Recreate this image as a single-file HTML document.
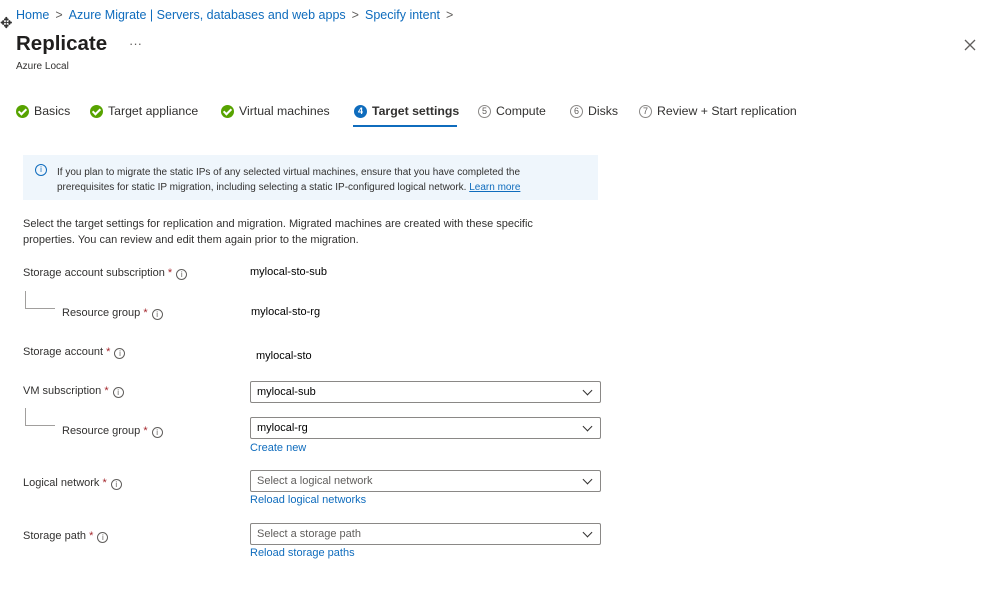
<!DOCTYPE html>
<html><head><style>
*{margin:0;padding:0;box-sizing:border-box}
body{width:984px;height:615px;background:#fff;font-family:"Liberation Sans",sans-serif;color:#323130;position:relative;overflow:hidden}
.a{position:absolute;white-space:nowrap}
.lnk{color:#0f6cbd}
.bc{font-size:12.5px;color:#0f6cbd;top:8px;left:16px}
.bc span.s{color:#605e5c;margin:0 6px}
.tab{top:104px;font-size:12.3px;display:flex;align-items:center;gap:5px;color:#323130}
.ok{width:13px;height:13px;border-radius:50%;background:#57a300;display:inline-block;position:relative}
.ok:after{content:"";position:absolute;left:4px;top:2px;width:3px;height:6px;border:solid #fff;border-width:0 2px 2px 0;transform:rotate(45deg)}
.num{width:13px;height:13px;border-radius:50%;border:1px solid #8a8886;font-size:9px;display:inline-flex;align-items:center;justify-content:center;color:#605e5c}
.lab{font-size:11px;color:#323130}
.lab .r{color:#a4262c}
.i{display:inline-block;width:11px;height:11px;border:1px solid #605e5c;border-radius:50%;font-size:8px;text-align:center;line-height:9px;margin-left:4px;vertical-align:-1px;color:#605e5c}
.val{font-size:11px;color:#000}
.dd{position:absolute;left:250px;width:351px;height:22px;border:1px solid #8a8886;border-radius:2px;font-size:11px;padding:4px 6px;color:#000}
.dd.p{color:#605e5c}
.dd:after{content:"";position:absolute;right:9px;top:5px;width:6px;height:6px;border:solid #323130;border-width:0 1px 1px 0;transform:rotate(45deg)}
.sm{font-size:11px}
.tree{position:absolute;border-left:1px solid #a19f9d;border-bottom:1px solid #a19f9d;width:30px}
</style></head><body>
<div class="a bc">Home<span class="s">&gt;</span>Azure Migrate | Servers, databases and web apps<span class="s">&gt;</span>Specify intent<span class="s">&gt;</span></div>
<div class="a" style="left:0;top:14px;font-size:15px;color:#333">✥</div>
<div class="a" style="left:16px;top:32px;font-size:20.5px;font-weight:bold;color:#201f1e">Replicate</div>
<div class="a" style="left:129px;top:36px;font-size:13px;color:#605e5c">···</div>
<div class="a" style="left:16px;top:61px;font-size:10px;color:#323130">Azure Local</div>
<svg class="a" style="left:964px;top:39px" width="12" height="12" viewBox="0 0 12 12"><path d="M1 1L11 11M11 1L1 11" stroke="#605e5c" stroke-width="1.3"/></svg>

<div class="a tab" style="left:16px"><span class="ok"></span>Basics</div>
<div class="a tab" style="left:90px"><span class="ok"></span>Target appliance</div>
<div class="a tab" style="left:221px"><span class="ok"></span>Virtual machines</div>
<div class="a tab" style="left:354px;font-weight:bold"><span class="num" style="background:#0f6cbd;border-color:#0f6cbd;color:#fff;font-weight:bold">4</span>Target settings</div>
<div class="a" style="left:353px;top:125px;width:104px;height:2px;background:#0f6cbd"></div>
<div class="a tab" style="left:478px"><span class="num">5</span>Compute</div>
<div class="a tab" style="left:570px"><span class="num">6</span>Disks</div>
<div class="a tab" style="left:639px"><span class="num">7</span>Review + Start replication</div>

<div class="a" style="left:23px;top:155px;width:575px;height:45px;background:#eff6fc"></div>
<div class="a" style="left:35px;top:164px;width:12px;height:12px;border:1px solid #0f6cbd;border-radius:50%;font-size:8px;color:#0f6cbd;text-align:center;line-height:10px">i</div>
<div class="a" style="left:57px;top:165px;font-size:10px;line-height:15px;color:#323130">If you plan to migrate the static IPs of any selected virtual machines, ensure that you have completed the<br>prerequisites for static IP migration, including selecting a static IP-configured logical network. <span class="lnk" style="text-decoration:underline">Learn more</span></div>

<div class="a" style="left:23px;top:216px;font-size:11px;line-height:16px">Select the target settings for replication and migration. Migrated machines are created with these specific<br>properties. You can review and edit them again prior to the migration.</div>

<div class="a lab" style="left:23px;top:267px">Storage account subscription <span class="r">*</span><span class="i">i</span></div>
<div class="a val" style="left:250px;top:266px">mylocal-sto-sub</div>
<div class="tree" style="left:25px;top:291px;height:18px"></div>
<div class="a lab" style="left:62px;top:307px">Resource group <span class="r">*</span><span class="i">i</span></div>
<div class="a val" style="left:251px;top:306px">mylocal-sto-rg</div>

<div class="a lab" style="left:23px;top:346px">Storage account <span class="r">*</span><span class="i">i</span></div>
<div class="a val" style="left:256px;top:350px">mylocal-sto</div>

<div class="a lab" style="left:23px;top:385px">VM subscription <span class="r">*</span><span class="i">i</span></div>
<div class="dd" style="top:381px">mylocal-sub</div>
<div class="tree" style="left:25px;top:408px;height:18px"></div>
<div class="a lab" style="left:62px;top:425px">Resource group <span class="r">*</span><span class="i">i</span></div>
<div class="dd" style="top:417px">mylocal-rg</div>
<div class="a sm lnk" style="left:250px;top:442px">Create new</div>

<div class="a lab" style="left:23px;top:477px">Logical network <span class="r">*</span><span class="i">i</span></div>
<div class="dd p" style="top:470px">Select a logical network</div>
<div class="a sm lnk" style="left:250px;top:494px">Reload logical networks</div>

<div class="a lab" style="left:23px;top:530px">Storage path <span class="r">*</span><span class="i">i</span></div>
<div class="dd p" style="top:523px">Select a storage path</div>
<div class="a sm lnk" style="left:250px;top:547px">Reload storage paths</div>
</body></html>
